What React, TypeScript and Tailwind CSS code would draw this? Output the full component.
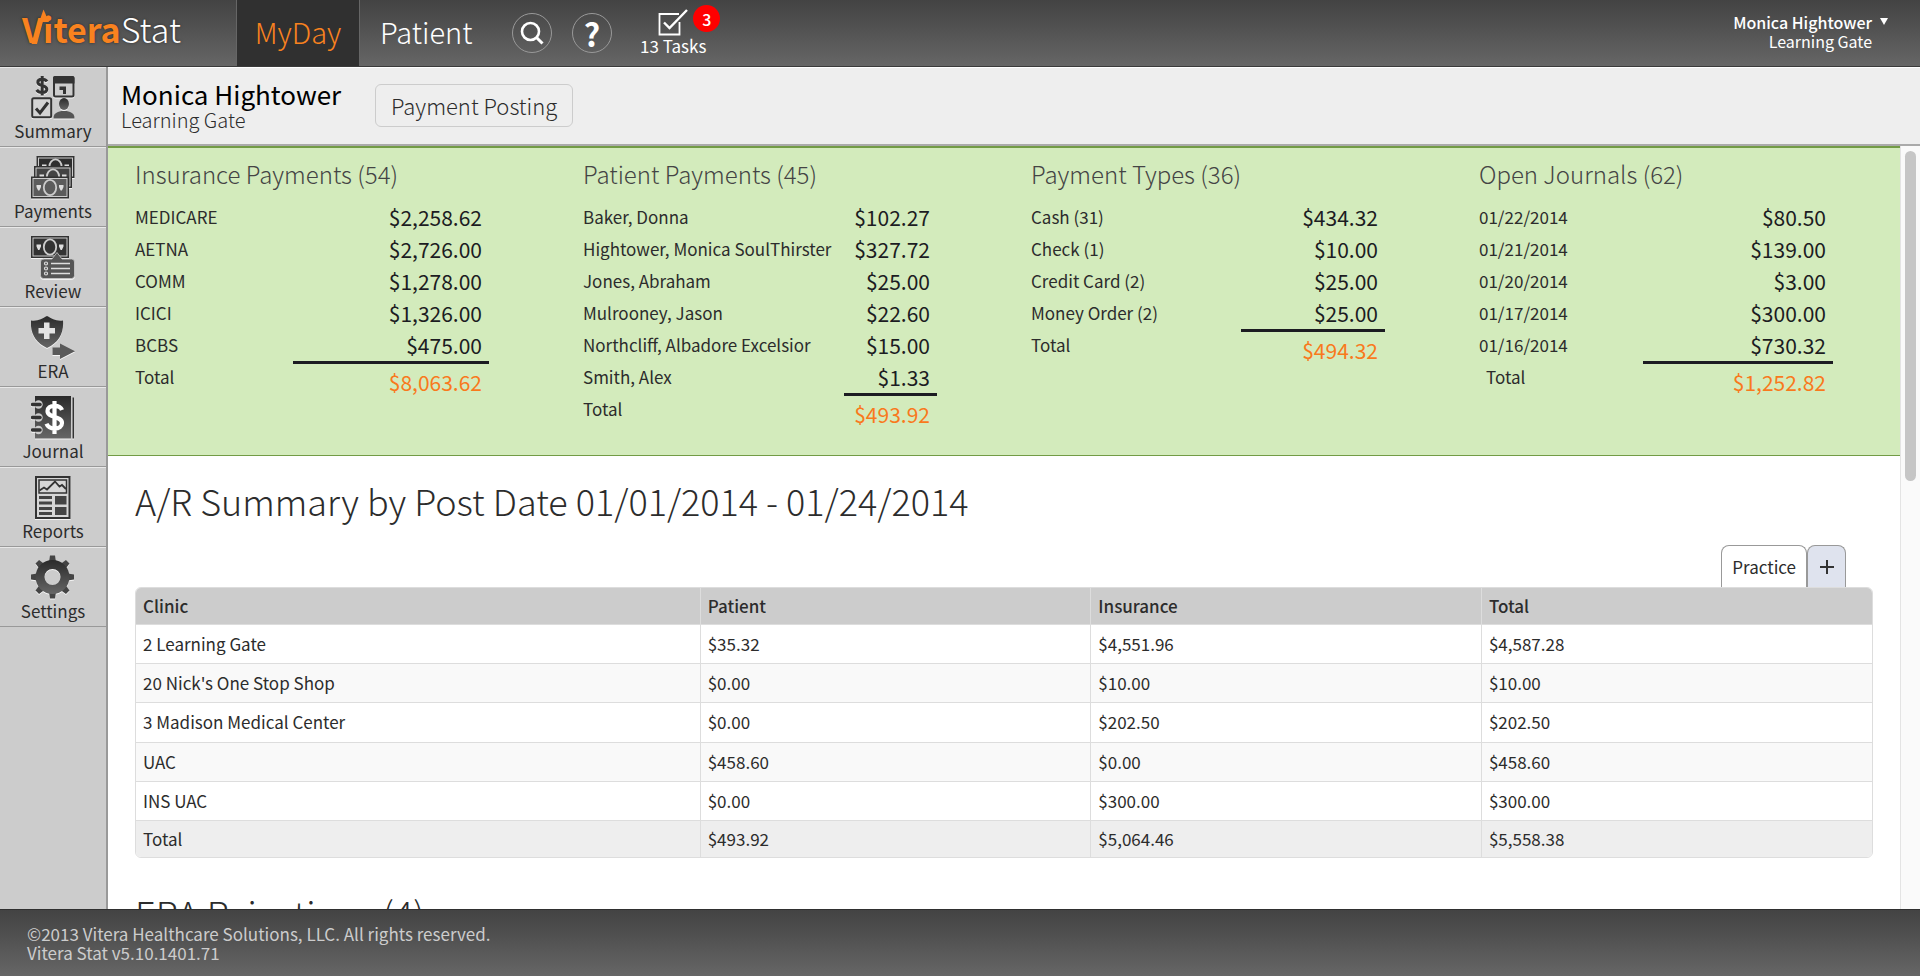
import type { ReactNode } from "react";

const ink = "#333";

function Icon({ children }: { children: ReactNode }) {
  return (
    <svg
      viewBox="0 0 44 44"
      className="size-11 drop-shadow-[0_1px_0_rgba(255,255,255,0.8)]"
      aria-hidden="true"
      fill={ink}
    >
      <defs>
        <linearGradient id="steel" x1="0" y1="0" x2="0" y2="1">
          <stop offset="0" stopColor="#2a2a2a" />
          <stop offset="1" stopColor="#666" />
        </linearGradient>
      </defs>
      {children}
    </svg>
  );
}

function Bill({ x, y, fill }: { x: number; y: number; fill: string }) {
  return (
    <g transform={`translate(${x} ${y})`}>
      <rect width="38" height="22" fill="#333" />
      <rect x="2" y="2" width="34" height="18" fill={fill} stroke="#ccc" strokeWidth="1" />
      <ellipse cx="19" cy="11" rx="6.2" ry="7.6" fill={fill} stroke="#ccc" strokeWidth="1.8" />
      <path d="M5.500 8.500h4.500v2L8.400 14H7.100L5.500 10.500zM28 8.500h4.500v2L30.900 14h-1.300L28 10.500z" fill="#ddd" />
    </g>
  );
}

function SummaryIcon() {
  return (
    <Icon>
      <path
        d="M16 6.500C15 4.800 13.300 4.200 11.200 4.200 8.600 4.200 6.800 5.400 6.800 7.300c0 4.700 9 2 9 6.900 0 2-2 3.300-4.700 3.300-2.300 0-4.300-.8-5.400-2.600M11.200 1v19.500"
        fill="none"
        stroke={ink}
        strokeWidth="3"
      />
      <rect x="23" y="2" width="19.500" height="19.500" rx="1.500" fill="#ccc" stroke={ink} strokeWidth="2" />
      <path d="M22 3a2 2 0 0 1 2-2h17.500a2 2 0 0 1 2 2v5.500H22z" />
      <path d="M28.500 11.500h6.500v7.500h-3v-4h-3.500z" />
      <rect x="1.200" y="23.200" width="19" height="19" rx="1.500" fill="#d4d4d4" stroke={ink} strokeWidth="2" />
      <path d="M5 33.500l4 4.500L17 27.500" fill="none" stroke={ink} strokeWidth="3" />
      <ellipse cx="33" cy="29" rx="5" ry="6" fill="url(#steel)" />
      <path d="M22.500 43.500c0-5 2.500-6 8-7.500h5c5.500 1.500 8 2.500 8 7.500z" fill="#555" />
    </Icon>
  );
}

function PaymentsIcon() {
  return (
    <Icon>
      <Bill x={5.5} y={1} fill="#2e2e2e" />
      <Bill x={3} y={11} fill="#444" />
      <Bill x={0} y={21.5} fill="#5c5c5c" />
    </Icon>
  );
}

function ReviewIcon() {
  return (
    <Icon>
      <Bill x={0} y={1} fill="#333" />
      <path
        d="M12 24h9l5-6.500 5 6.500h9.500a3 3 0 0 1 3 3v13.500a3 3 0 0 1-3 3H12.500a3 3 0 0 1-3-3V27a3 3 0 0 1 3-3z"
        fill="#555"
        stroke="#c8c8c8"
        strokeWidth="0.8"
      />
      <path d="M20 28.500h19M20 33.500h19M20 38.500h19" stroke="#ddd" strokeWidth="1.600" />
      <g fill="none" stroke="#ddd" strokeWidth="1.200">
        <circle cx="15" cy="28.500" r="1.500" />
        <circle cx="15" cy="33.500" r="1.500" />
        <circle cx="15" cy="38.500" r="1.500" />
      </g>
    </Icon>
  );
}

function EraIcon() {
  return (
    <Icon>
      <path
        d="M0 5.500C7 6.500 11 3.500 16 1c5 2.500 9 5.500 16 4.500 1 12-4 22-16 27.500C4 27.500-1 17.500 0 5.500z"
        fill="url(#steel)"
      />
      <path d="M13 7.500h5.500V13H24v5.500h-5.500V24H13v-5.500H7.500V13H13z" fill="#e4e4e4" />
      <path d="M21.500 32.500h7.500V28.500L44 36.300 29 44v-4h-7.500z" fill="#5a5a5a" />
    </Icon>
  );
}

function JournalIcon() {
  return (
    <Icon>
      <path d="M4 1h36v42.500H4z" fill="url(#steel)" />
      <path d="M41.500 2.500H43v41h-1.500z" />
      {[9.5, 22.5, 35].map((y) => (
        <g key={y}>
          <circle cx="7.500" cy={y} r="4.200" fill="#ccc" />
          <path d={`M1.500 ${y}H9`} stroke={ink} strokeWidth="3.500" strokeLinecap="round" />
        </g>
      ))}
      <path
        d="M31 15C30 12 27 10.800 23.500 10.800c-4.200 0-7 2-7 5.200 0 7.500 14.500 4.500 14.500 12 0 3.300-3 5.500-7.300 5.500-4 0-7-1.700-8.200-4.800M23.500 6v33"
        fill="none"
        stroke="#fff"
        strokeWidth="4.200"
      />
    </Icon>
  );
}

function ReportsIcon() {
  return (
    <Icon>
      <rect x="5" y="2" width="33.500" height="41" fill="#d6d6d6" stroke={ink} strokeWidth="2" />
      <rect x="8" y="5" width="27.500" height="13" fill="none" stroke={ink} strokeWidth="1.500" />
      <path d="M8.500 15.500l4.500-3 3 2L24 6.500l4.500 5 2.500-1.500 4 4" fill="none" stroke={ink} strokeWidth="1.800" />
      <path d="M8 21h13v3H8zM8 26.500h13v3H8zM8 32h13v3H8zM8 37h13v3H8zM24 21h11.500v8.500H24zM24 32h11.500v8H24z" fill="#444" />
    </Icon>
  );
}

function SettingsIcon() {
  return (
    <Icon>
      <g transform="translate(21.5 22)">
        <g fill="#444">
          {[0, 45, 90, 135, 180, 225, 270, 315].map((angle) => (
            <path key={angle} d="M-3.500-15l1-6.500h5l1 6.500z" transform={`rotate(${angle})`} />
          ))}
        </g>
        <path
          fillRule="evenodd"
          d="M0-17a17 17 0 1 0 0 34 17 17 0 1 0 0-34zM0-8a8 8 0 1 1 0 16 8 8 0 1 1 0-16z"
          fill="url(#steel)"
        />
      </g>
    </Icon>
  );
}

const navItems = [
  { label: "Summary", icon: <SummaryIcon /> },
  { label: "Payments", icon: <PaymentsIcon /> },
  { label: "Review", icon: <ReviewIcon /> },
  { label: "ERA", icon: <EraIcon /> },
  { label: "Journal", icon: <JournalIcon /> },
  { label: "Reports", icon: <ReportsIcon /> },
  { label: "Settings", icon: <SettingsIcon /> },
];

type Summary = {
  title: string;
  amountWidth: string;
  rows: [string, string][];
  total: string;
  indentTotal?: boolean;
};

const summaries: Summary[] = [
  {
    title: "Insurance Payments (54)",
    amountWidth: "w-[196px]",
    rows: [
      ["MEDICARE", "$2,258.62"],
      ["AETNA", "$2,726.00"],
      ["COMM", "$1,278.00"],
      ["ICICI", "$1,326.00"],
      ["BCBS", "$475.00"],
    ],
    total: "$8,063.62",
  },
  {
    title: "Patient Payments (45)",
    amountWidth: "w-[93px]",
    rows: [
      ["Baker, Donna", "$102.27"],
      ["Hightower, Monica SoulThirster", "$327.72"],
      ["Jones, Abraham", "$25.00"],
      ["Mulrooney, Jason", "$22.60"],
      ["Northcliff, Albadore Excelsior", "$15.00"],
      ["Smith, Alex", "$1.33"],
    ],
    total: "$493.92",
  },
  {
    title: "Payment Types (36)",
    amountWidth: "w-[144px]",
    rows: [
      ["Cash (31)", "$434.32"],
      ["Check (1)", "$10.00"],
      ["Credit Card (2)", "$25.00"],
      ["Money Order (2)", "$25.00"],
    ],
    total: "$494.32",
  },
  {
    title: "Open Journals (62)",
    amountWidth: "w-[190px]",
    rows: [
      ["01/22/2014", "$80.50"],
      ["01/21/2014", "$139.00"],
      ["01/20/2014", "$3.00"],
      ["01/17/2014", "$300.00"],
      ["01/16/2014", "$730.32"],
    ],
    total: "$1,252.82",
    indentTotal: true,
  },
];

const clinicRows = [
  ["2 Learning Gate", "$35.32", "$4,551.96", "$4,587.28"],
  ["20 Nick's One Stop Shop", "$0.00", "$10.00", "$10.00"],
  ["3 Madison Medical Center", "$0.00", "$202.50", "$202.50"],
  ["UAC", "$458.60", "$0.00", "$458.60"],
  ["INS UAC", "$0.00", "$300.00", "$300.00"],
];

function SummaryBlock({ title, amountWidth, rows, total, indentTotal }: Summary) {
  return (
    <section className="flex-1 pr-[67px] pl-[27px]">
      <h2 className="mb-[7px] text-2xl leading-10 font-light whitespace-nowrap text-[#444]">{title}</h2>
      <table className="w-full table-fixed border-separate border-spacing-0">
        <colgroup>
          <col />
          <col className={amountWidth} />
        </colgroup>
        <tbody>
          {rows.map(([label, amount]) => (
            <tr key={label} className="h-8">
              <th scope="row" className="p-0 text-left text-[17px] leading-8 font-normal whitespace-nowrap text-[#2c2c2c]">
                {label}
              </th>
              <td className="p-0 pr-[7px] text-right text-[21px] leading-8 text-[#1c1c22]">{amount}</td>
            </tr>
          ))}
          <tr className="align-top">
            <th
              scope="row"
              className={`p-0 text-left text-[17px] leading-8 font-normal text-[#2c2c2c] ${indentTotal ? "pl-[7px]" : ""}`}
            >
              Total
            </th>
            <td className="border-t-3 border-[#1c1c22] p-0 pt-[2px] pr-[7px] text-right text-[21px] leading-8 text-[#f9791c]">
              {total}
            </td>
          </tr>
        </tbody>
      </table>
    </section>
  );
}

function Logo() {
  return (
    <a
      href="#home"
      className="relative flex items-baseline text-[34px] leading-[58px] text-white text-shadow-[0_0_3px_rgba(0,0,0,0.5)]"
    >
      <span className="font-bold text-[#f9821f]">Vitera</span>
      <span className="font-light">Stat</span>
      <svg viewBox="0 0 28 36" className="absolute top-[9px] left-0 h-9 w-7" fill="#f9821f" aria-hidden="true">
        <path d="M21.500 0.500L27 13H20.800L15 35H9.500z" />
      </svg>
    </a>
  );
}

export default function App() {
  return (
    <div className="flex h-screen flex-col overflow-hidden bg-white font-['Noto_Sans_CJK_SC','Noto_Sans',sans-serif] text-[#2c2c2c]">
      <header className="flex h-[67px] shrink-0 border-b border-[#3a3a3a] bg-linear-to-b from-[#434343] to-[#666] text-white">
        <div className="w-[236px] pl-[22px]">
          <Logo />
        </div>
        <nav className="flex text-[29px] leading-[63px] font-light">
          <a href="#myday" className="w-[124px] border-x border-[#666] bg-[#303030] text-center text-[#f9821f]">
            MyDay
          </a>
          <a href="#patient" className="w-[152px] pl-5">
            Patient
          </a>
        </nav>
        <div className="flex gap-5 pt-[13px]">
          <button aria-label="Search" className="flex size-10 items-center justify-center rounded-full border border-[#999]">
            <svg viewBox="0 0 24 24" className="size-6" fill="none" stroke="#fff" aria-hidden="true">
              <circle cx="10.500" cy="10.500" r="8.500" strokeWidth="2.600" />
              <path d="M16.500 16.500L22.500 22.500" strokeWidth="3" />
            </svg>
          </button>
          <button aria-label="Help" className="flex size-10 items-center justify-center rounded-full border border-[#999] text-[32px] leading-none font-bold">
            ?
          </button>
        </div>
        <button className="relative ml-7 h-[60px] pt-1 text-[17px] leading-5">
          <svg viewBox="0 0 30 28" className="mx-auto h-7 w-[30px]" fill="none" stroke="#fff" strokeWidth="1.800" aria-hidden="true">
            <path d="M21 6H1.500v20.500h20V14" />
            <path d="M6 14.500l5.500 5.500L29 2" strokeWidth="2.400" />
          </svg>
          13 Tasks
          <span className="absolute top-[5px] -right-[14px] flex size-[27px] items-center justify-center rounded-full bg-[#f00] text-base font-medium">
            3
          </span>
        </button>
        <button className="mr-8 ml-auto flex gap-2 pt-[13px] text-right">
          <span className="text-base leading-[19px]">
            <span className="block font-medium">Monica Hightower</span>
            <span className="block">Learning Gate</span>
          </span>
          <svg viewBox="0 0 8 7" className="mt-[5px] h-[7px] w-2" fill="#fff" aria-hidden="true">
            <path d="M0 0h8L4 7z" />
          </svg>
        </button>
      </header>

      <div className="flex min-h-0 flex-1">
        <nav className="w-[108px] shrink-0 border-r-2 border-[#999] bg-[#ccc]">
          {navItems.map(({ label, icon }) => (
            <a
              key={label}
              href={`#${label.toLowerCase()}`}
              className="flex h-20 flex-col items-center border-t border-b border-t-[#e8e8e8] border-b-[#999] pt-[7px] text-[17px] leading-6"
            >
              {icon}
              {label}
            </a>
          ))}
        </nav>

        <div className="flex min-w-0 flex-1 flex-col">
          <div className="flex h-[79px] shrink-0 items-center border-t border-b-2 border-t-white border-b-[#aaa] bg-[#eee] pb-px">
            <div className="w-[267px] pl-[13px]">
              <h1 className="text-[26px] leading-7 text-black">Monica Hightower</h1>
              <p className="text-xl leading-6 font-light">Learning Gate</p>
            </div>
            <button className="h-[43px] rounded-md border border-[#ccc] px-[15px] pb-px text-[22px] leading-none font-light">
              Payment Posting
            </button>
          </div>

          <div className="flex min-h-0 flex-1">
            <main className="min-w-0 flex-1 overflow-hidden">
              <div className="flex h-[310px] border-t-2 border-b border-[#729b45] bg-[#d3ebbc] pt-[6px]">
                {summaries.map((s) => (
                  <SummaryBlock key={s.title} {...s} />
                ))}
              </div>
              <section className="px-[27px]">
                <h2 className="pt-[17px] text-[36px] leading-[54px] font-light">A/R Summary by Post Date 01/01/2014 - 01/24/2014</h2>
                <div className="mt-[18px] flex justify-end pr-[27px]">
                  <button className="h-[42px] rounded-t-lg border border-b-0 border-[#999] bg-white px-[10px] text-[17px]">
                    Practice
                  </button>
                  <button
                    aria-label="Add tab"
                    className="flex h-[42px] w-[39px] items-center justify-center rounded-t-lg border border-b-0 border-[#999] bg-[#dfe3ee]"
                  >
                    <svg viewBox="0 0 14 14" className="size-[14px]" stroke="#333" strokeWidth="2" aria-hidden="true">
                      <path d="M7 0v14M0 7h14" />
                    </svg>
                  </button>
                </div>
                <div className="overflow-hidden rounded-md border border-[#ddd]">
                  <table className="h-[269px] w-full table-fixed border-collapse text-left text-[17px] leading-9">
                    <thead>
                      <tr className="bg-[#ccc]">
                        <th className="w-[32.5%] p-0 pl-[7px] font-medium">Clinic</th>
                        <th className="border-l border-[#ddd] p-0 pl-[7px] font-medium">Patient</th>
                        <th className="border-l border-[#ddd] p-0 pl-[7px] font-medium">Insurance</th>
                        <th className="border-l border-[#ddd] p-0 pl-[7px] font-medium">Total</th>
                      </tr>
                    </thead>
                    <tbody>
                      {clinicRows.map((row) => (
                        <tr key={row[0]} className="border-t border-[#ddd] even:bg-[#f9f9f9]">
                          {row.map((cell, i) => (
                            <td key={i} className="border-l border-[#ddd] p-0 pl-[7px] first:border-l-0">
                              {cell}
                            </td>
                          ))}
                        </tr>
                      ))}
                    </tbody>
                    <tfoot>
                      <tr className="border-t border-[#ddd] bg-[#eee]">
                        <td className="p-0 pl-[7px]">Total</td>
                        <td className="border-l border-[#ddd] p-0 pl-[7px]">$493.92</td>
                        <td className="border-l border-[#ddd] p-0 pl-[7px]">$5,064.46</td>
                        <td className="border-l border-[#ddd] p-0 pl-[7px]">$5,558.38</td>
                      </tr>
                    </tfoot>
                  </table>
                </div>
                <h2 className="pt-[27px] text-[36px] leading-[54px] font-light">ERA Rejections (4)</h2>
              </section>
            </main>
            <div className="w-5 shrink-0 border-l border-[#e4e4e4] bg-[#fafafa] px-1 pt-[5px]">
              <div className="h-[330px] rounded-full bg-[#c6c6c6]" />
            </div>
          </div>
        </div>
      </div>

      <footer className="h-[67px] shrink-0 border-t border-[#2f2f2f] bg-linear-to-b from-[#434343] to-[#666] pt-[14px] pl-[27px] text-[17px] leading-[19px] text-[#ccc]">
        <p>©2013 Vitera Healthcare Solutions, LLC. All rights reserved.</p>
        <p>Vitera Stat v5.10.1401.71</p>
      </footer>
    </div>
  );
}
